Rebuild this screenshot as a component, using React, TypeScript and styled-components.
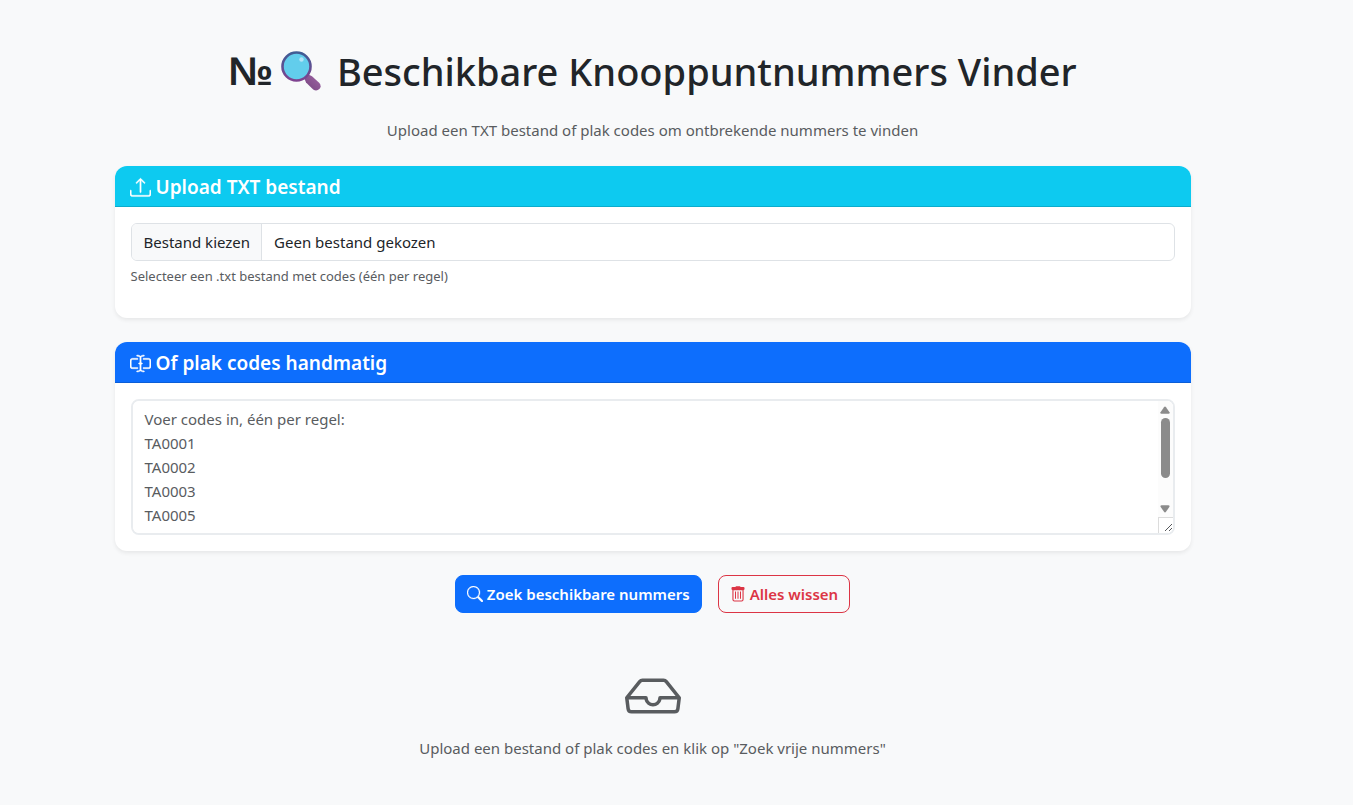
import React, { useRef, useState } from "react";
import styled, { createGlobalStyle, css } from "styled-components";
import { BsInbox, BsInputCursorText, BsSearch, BsUpload } from "react-icons/bs";

const GlobalStyle = createGlobalStyle`
  *, *::before, *::after { box-sizing: border-box; }
  body {
    margin: 0;
    background: #f8f9fa;
    color: #212529;
    font-family: "Segoe UI", "Noto Sans", "Open Sans", sans-serif;
    font-size: 15px;
    line-height: 24px;
  }
`;

const Shell = styled.div`
  padding-right: 48px;
`;

const Page = styled.main`
  max-width: 1100px;
  margin: 0 auto;
  padding: 47px 12px;
`;

const Heading = styled.header`
  display: flex;
  flex-direction: column;
  align-items: center;
  gap: 23px;
  margin-bottom: 24px;
  text-align: center;
`;

const Title = styled.h1`
  display: flex;
  align-items: center;
  justify-content: center;
  margin: 0;
  font-size: 38px;
  font-weight: 500;
  line-height: 48px;
`;

const Numero = styled.span`
  font-family: "Liberation Sans", sans-serif;
  font-size: 40px;
  font-weight: 700;
`;

const Lens = styled.svg`
  width: 40px;
  height: 40px;
  margin: 0 16px 0 8px;
  flex: none;
`;

const Muted = styled.p`
  margin: 0;
  color: #595c5f;
`;

const Card = styled.section`
  margin-bottom: 24px;
  border-radius: 12px;
  background: #fff;
  box-shadow: 0 2px 4px rgba(0, 0, 0, 0.075);
  overflow: hidden;
`;

const CardHeader = styled.div<{ $tone: string; $line: string }>`
  padding: 9px 15px 7px;
  border-bottom: 1px solid ${(p) => p.$line};
  background: ${(p) => p.$tone};
  color: #fff;
`;

const CardTitle = styled.h2`
  display: flex;
  align-items: center;
  gap: 5px;
  margin: 0;
  font-size: 19px;
  font-weight: 600;
  line-height: 24px;

  svg {
    width: 21px;
    height: 21px;
    stroke-width: 0.3;
  }
`;

const CardBody = styled.div<{ $roomy?: boolean }>`
  padding: 16px 16px ${(p) => (p.$roomy ? 31 : 16)}px;
`;

const FilePicker = styled.label`
  position: relative;
  display: flex;
  height: 38px;
  border: 1px solid #dee2e6;
  border-radius: 6px;
  line-height: 36px;
  overflow: hidden;
  cursor: pointer;
`;

const FileInput = styled.input`
  position: absolute;
  inset: 0;
  width: 100%;
  opacity: 0;
  cursor: pointer;
`;

const FileButton = styled.span`
  padding: 0 11px 0 12px;
  border-right: 1px solid #dee2e6;
  background: #f8f9fa;
`;

const FileName = styled.span`
  padding: 0 12px;
`;

const Hint = styled.p`
  margin: 5px 0 0;
  color: #595c5f;
  font-size: 13px;
  line-height: 21px;
`;

const CodeField = styled.div`
  position: relative;
`;

const CodeBox = styled.textarea`
  display: block;
  width: 100%;
  height: 136px;
  padding: 6px 12px;
  border: 2px solid #e9ecef;
  border-radius: 8px;
  background: #fff;
  color: #212529;
  font: inherit;
  resize: none;
  overflow-y: scroll;
  scrollbar-width: none;

  &::placeholder {
    color: #595c5f;
    opacity: 1;
  }
`;

const ScrollRail = styled.div`
  position: absolute;
  top: 2px;
  right: 2px;
  bottom: 2px;
  width: 15px;
  display: flex;
  flex-direction: column;
  align-items: center;
  border-radius: 0 6px 6px 0;
  background: #fcfcfc;
  overflow: hidden;
  pointer-events: none;
`;

const RailArrow = styled.svg`
  width: 10px;
  height: 8px;
  margin: 5px 0 4px;
  fill: #8b8b8b;
  flex: none;
`;

const RailThumb = styled.div`
  width: 9px;
  height: 60px;
  margin-bottom: auto;
  border-radius: 5px;
  background: #8b8b8b;
`;

const Grip = styled.svg`
  width: 15px;
  height: 16px;
  border: solid #dcdcdc;
  border-width: 1px 0 0 1px;
  background: #fff;
  stroke: #55585c;
  flex: none;
`;

const Actions = styled.div`
  display: flex;
  justify-content: center;
  gap: 16px;
`;

const Button = styled.button<{ $outline?: boolean }>`
  display: flex;
  align-items: center;
  gap: 4px;
  height: 38px;
  padding: 0 11px;
  border: 1px solid #0d6efd;
  border-radius: 8px;
  background: #0d6efd;
  color: #fff;
  font: inherit;
  font-weight: 600;
  cursor: pointer;
  ${(p) =>
    p.$outline &&
    css`
      border-color: #dc3545;
      background: transparent;
      color: #dc3545;
    `}

  svg {
    width: 16px;
    height: 16px;
    stroke-width: 0.3;
  }
`;

const Empty = styled.section`
  display: flex;
  flex-direction: column;
  align-items: center;
  gap: 12px;
  padding-top: 55px;
  color: #595c5f;
  text-align: center;
`;

const samplePlaceholder = [
  "Voer codes in, één per regel:",
  "TA0001",
  "TA0002",
  "TA0003",
  "TA0005",
  "TA0008",
  "TA0010",
].join("\n");

function Magnifier() {
  return (
    <Lens viewBox="0 0 40 40" aria-hidden="true">
      <defs>
        <linearGradient id="rim" x1="0" y1="0" x2="0" y2="1">
          <stop offset="0" stopColor="#3f5c94" />
          <stop offset="1" stopColor="#7f4390" />
        </linearGradient>
        <linearGradient id="grip" x1="0" y1="1" x2="1" y2="0">
          <stop offset="0" stopColor="#75447f" />
          <stop offset="1" stopColor="#a066a5" />
        </linearGradient>
      </defs>
      <path d="M25 25 L29 29" stroke="#6b4080" strokeWidth="5" />
      <path
        d="M23.8 28.6 Q23.2 26.6 24.9 24.9 Q26.8 23.2 29 24.2 L31 25.2 L38.4 32 Q40.8 35.2 38.4 38.1 Q35.4 40.6 32.2 38.4 L25 31.4 Z"
        fill="url(#grip)"
      />
      <circle cx="15.5" cy="15.5" r="14" fill="#62cdec" stroke="url(#rim)" strokeWidth="2.6" />
      <circle cx="20.5" cy="8.5" r="2.2" fill="#b3e4f8" />
    </Lens>
  );
}

function Bin() {
  return (
    <svg viewBox="0 0 16 16" fill="currentColor" aria-hidden="true">
      <path d="M5.5 1a.8.8 0 0 1 .8-.8h3.4a.8.8 0 0 1 .8.8h3a1 1 0 0 1 1 1v1a1 1 0 0 1-1 1h-11a1 1 0 0 1-1-1V2a1 1 0 0 1 1-1z" />
      <path
        fillRule="evenodd"
        d="M2.4 3.5h11.2V13.5a2 2 0 0 1-2 2H4.4a2 2 0 0 1-2-2zM3.5 4.2V13.4a1 1 0 0 0 1 1h7a1 1 0 0 0 1-1V4.2z"
      />
      <path d="M5 5.5h1v7.3H5zM7.5 5.5h1v7.3h-1zM10 5.5h1v7.3h-1z" />
    </svg>
  );
}

export default function App() {
  const [fileName, setFileName] = useState("");
  const [codes, setCodes] = useState("");
  const fileRef = useRef<HTMLInputElement>(null);

  const clearAll = () => {
    setCodes("");
    setFileName("");
    if (fileRef.current) fileRef.current.value = "";
  };

  return (
    <Shell>
      <GlobalStyle />
      <Page>
        <Heading>
          <Title>
            <Numero>№</Numero>
            <Magnifier />
            <span>Beschikbare Knooppuntnummers Vinder</span>
          </Title>
          <Muted>Upload een TXT bestand of plak codes om ontbrekende nummers te vinden</Muted>
        </Heading>

        <Card>
          <CardHeader $tone="#0dcaf0" $line="#0baccc">
            <CardTitle>
              <BsUpload stroke="currentColor" />
              Upload TXT bestand
            </CardTitle>
          </CardHeader>
          <CardBody $roomy>
            <FilePicker>
              <FileInput
                ref={fileRef}
                type="file"
                accept=".txt"
                onChange={(e) => setFileName(e.target.files?.[0]?.name ?? "")}
              />
              <FileButton>Bestand kiezen</FileButton>
              <FileName>{fileName || "Geen bestand gekozen"}</FileName>
            </FilePicker>
            <Hint>Selecteer een .txt bestand met codes (één per regel)</Hint>
          </CardBody>
        </Card>

        <Card>
          <CardHeader $tone="#0d6efd" $line="#0b5ed7">
            <CardTitle id="codes-title">
              <BsInputCursorText />
              Of plak codes handmatig
            </CardTitle>
          </CardHeader>
          <CardBody>
            <CodeField>
              <CodeBox
                aria-labelledby="codes-title"
                placeholder={samplePlaceholder}
                value={codes}
                onChange={(e) => setCodes(e.target.value)}
              />
              <ScrollRail aria-hidden="true">
                <RailArrow viewBox="0 0 10 8">
                  <path d="M4 1.2Q5 0 6 1.2L9.5 6.2Q10 7.8 8.5 7.8H1.5Q0 7.8 .5 6.2Z" />
                </RailArrow>
                <RailThumb />
                <RailArrow viewBox="0 0 10 8">
                  <path d="M4 6.8Q5 8 6 6.8L9.5 1.8Q10 .2 8.5 .2H1.5Q0 .2 .5 1.8Z" />
                </RailArrow>
                <Grip viewBox="0 0 14 15">
                  <path d="M6 13L13 6M10 13L13 10" />
                </Grip>
              </ScrollRail>
            </CodeField>
          </CardBody>
        </Card>

        <Actions>
          <Button type="button">
            <BsSearch stroke="currentColor" />
            Zoek beschikbare nummers
          </Button>
          <Button type="button" $outline onClick={clearAll}>
            <Bin />
            Alles wissen
          </Button>
        </Actions>

        <Empty>
          <BsInbox size={56} />
          <Muted>Upload een bestand of plak codes en klik op "Zoek vrije nummers"</Muted>
        </Empty>
      </Page>
    </Shell>
  );
}
